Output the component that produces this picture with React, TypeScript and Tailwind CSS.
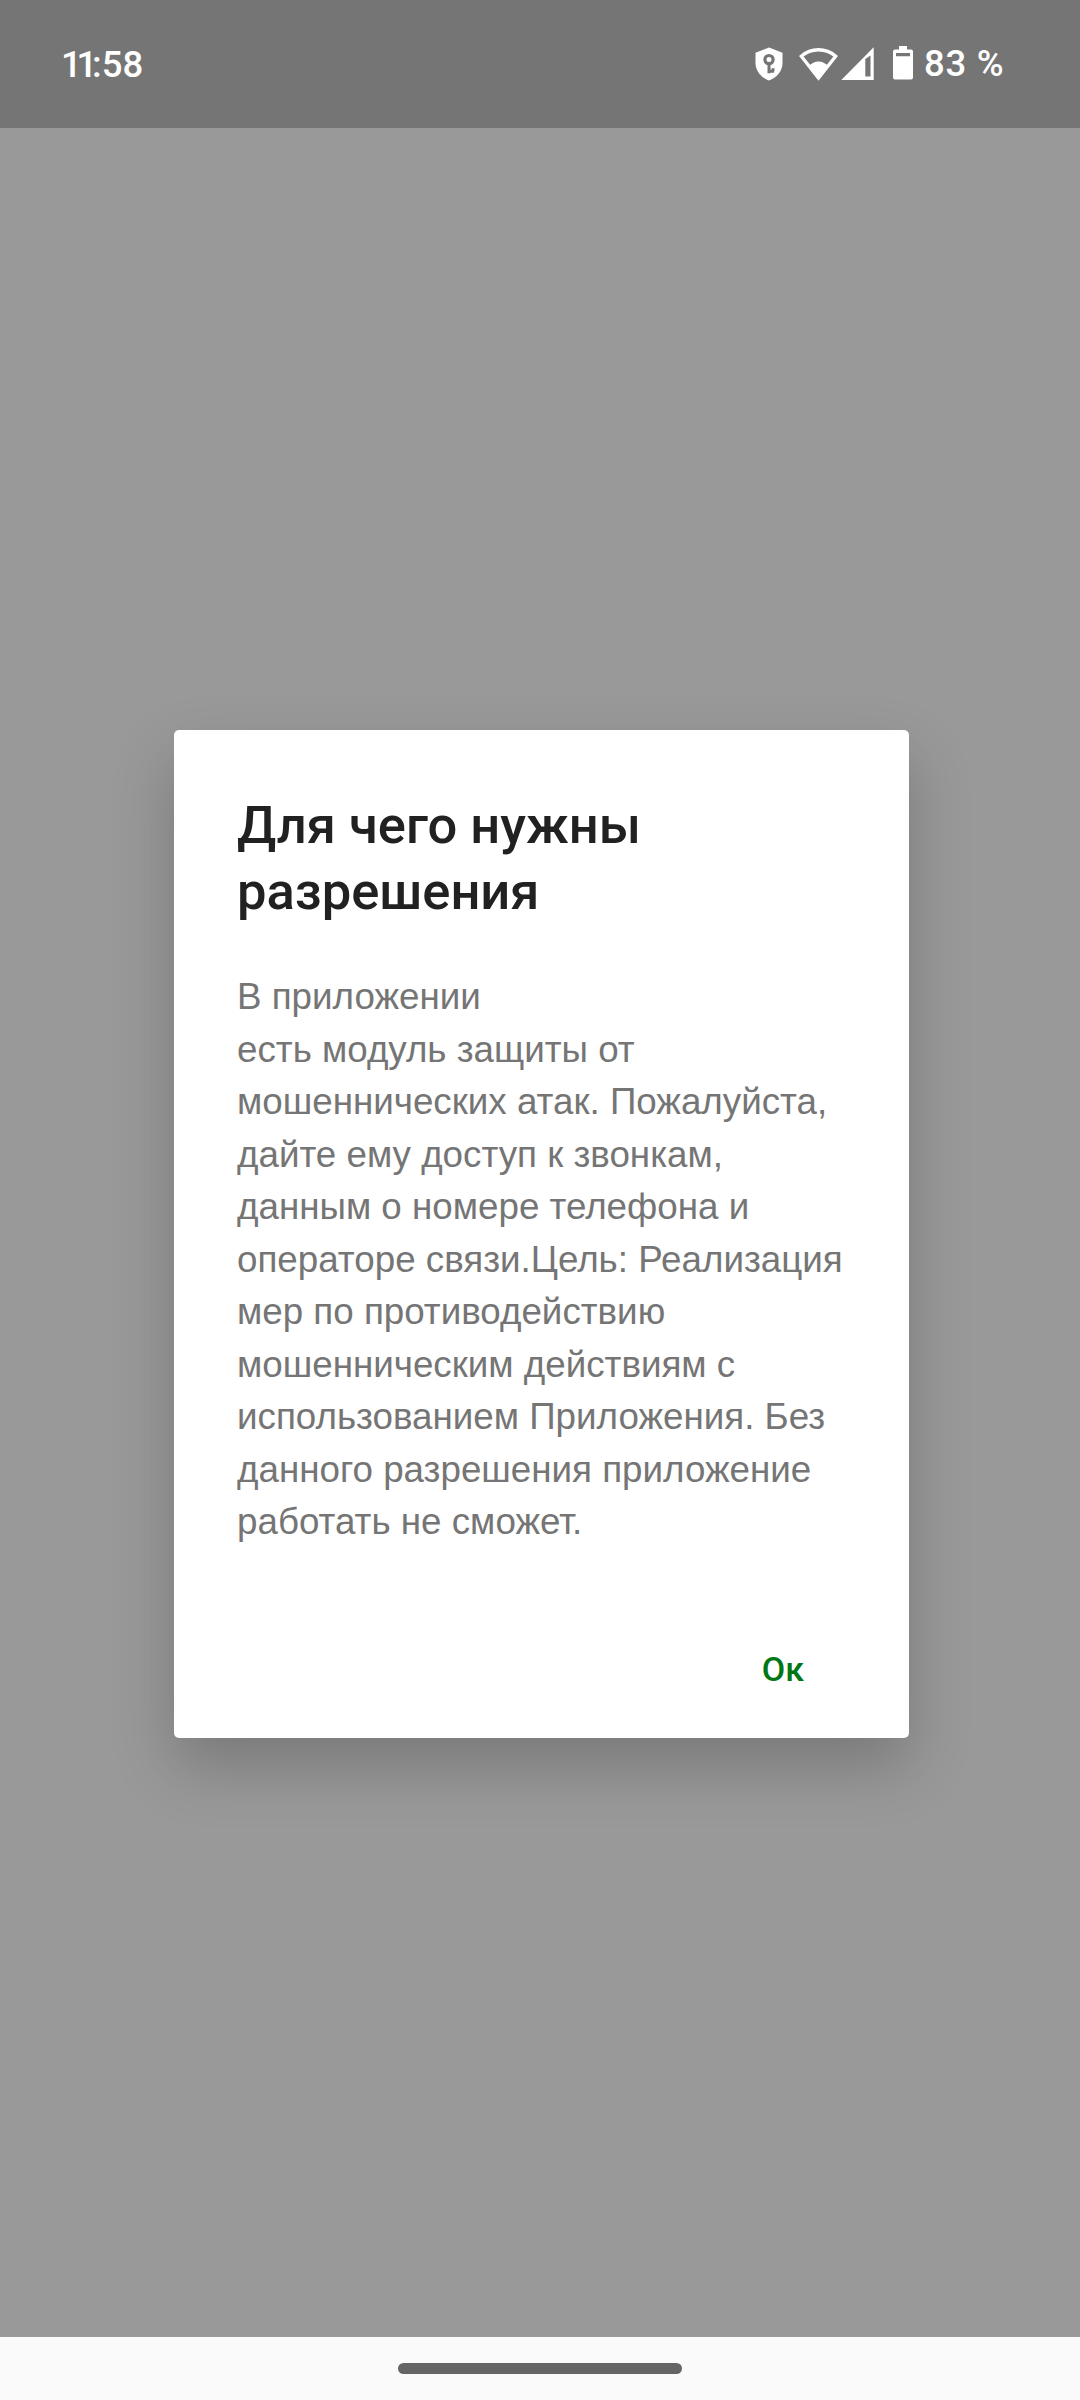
const lines = [
  'В приложении',
  'есть модуль защиты от',
  'мошеннических атак. Пожалуйста,',
  'дайте ему доступ к звонкам,',
  'данным о номере телефона и',
  'операторе связи.Цель: Реализация',
  'мер по противодействию',
  'мошенническим действиям с',
  'использованием Приложения. Без',
  'данного разрешения приложение',
  'работать не сможет.',
];

function StatusBar() {
  return (
    <header className="flex h-32 items-start justify-between bg-[#757575] pl-[61px] pr-[76px] pt-[42px] font-[Roboto,sans-serif] text-[36.5px] leading-[43px] font-medium text-white">
      <time className="mt-px whitespace-nowrap">
        <span className="tracking-[-5.2px]">11</span>
        <span>:58</span>
      </time>
      <div className="flex items-start">
        <svg className="mt-[5px] mr-[16px] h-[34px] w-[28px]" viewBox="0 0 28 34" fill="none">
          <path d="M14 .6 27.5 5.8V16C27.5 24 21.5 31 14 33.5 6.500 31 .5 24 .5 16V5.800Z" fill="#fff" />
          <circle cx="14" cy="12.600" r="4.100" stroke="#757575" strokeWidth="3.200" />
          <path d="M14 17v9.300M14 24.200h5M18 21.200v3" stroke="#757575" strokeWidth="3" />
        </svg>
        <svg className="mt-[5px] mr-[3px] h-[34px] w-[39px]" viewBox="0 0 39 34" fill="none">
          <path d="M2.300 9.200C12 .6 27 .6 36.700 9.200L19.500 31Z" stroke="#fff" strokeWidth="3.300" />
          <path d="M9.800 19.200C15 12.800 24 12.800 29.200 19.200L19.500 32.500Z" fill="#fff" />
        </svg>
        <svg className="mt-[5px] mr-[19px] h-[34px] w-[33px]" viewBox="0 0 33 34">
          <path fillRule="evenodd" d="M32.700.3V33H.3ZM24.300 12V29.500H29.500V8.500Z" fill="#fff" />
        </svg>
        <svg className="mt-[4px] mr-[11px] h-[34px] w-[20px]" viewBox="0 0 20 34">
          <path fillRule="evenodd" d="M6 0h8v3.500h4a2 2 0 0 1 2 2V31.500a2 2 0 0 1-2 2H2a2 2 0 0 1-2-2V5.500a2 2 0 0 1 2-2h4ZM3 7v3.300h14V7Z" fill="#fff" />
        </svg>
        <span className="w-[80px] whitespace-nowrap tracking-[0.7px]">83 %</span>
      </div>
    </header>
  );
}

function PermissionDialog() {
  return (
    <section
      role="dialog"
      className="flex h-[1008px] w-[735px] flex-col rounded-[5px] bg-white px-[63px] pt-[62px] shadow-[0_28px_62px_rgba(0,0,0,0.21)]"
    >
      <h1 className="font-[Roboto,sans-serif] text-[52.5px] leading-[66px] font-medium whitespace-nowrap text-[#212121]">
        Для чего нужны
        <br />
        разрешения
      </h1>
      <p className="mt-[47px] font-['Liberation_Sans',Arial,sans-serif] text-[36.75px] leading-[52.5px] whitespace-nowrap text-[#757575]">
        {lines.map((line) => (
          <span key={line} className="block">
            {line}
          </span>
        ))}
      </p>
      <button className="mt-[96px] mr-[42px] self-end font-[Roboto,sans-serif] text-[34px] leading-[48px] font-medium text-[#007715]">
        Ок
      </button>
    </section>
  );
}

export default function App() {
  return (
    <div className="flex h-[2400px] w-[1080px] flex-col overflow-hidden bg-[#999999]">
      <StatusBar />
      <main className="flex flex-1 items-start pt-[602px] pl-[174px]">
        <PermissionDialog />
      </main>
      <nav className="flex h-[63px] items-start justify-center bg-[#fafafa] pt-[26px]">
        <div className="h-[11px] w-[284px] rounded-full bg-[#656565]" />
      </nav>
    </div>
  );
}
